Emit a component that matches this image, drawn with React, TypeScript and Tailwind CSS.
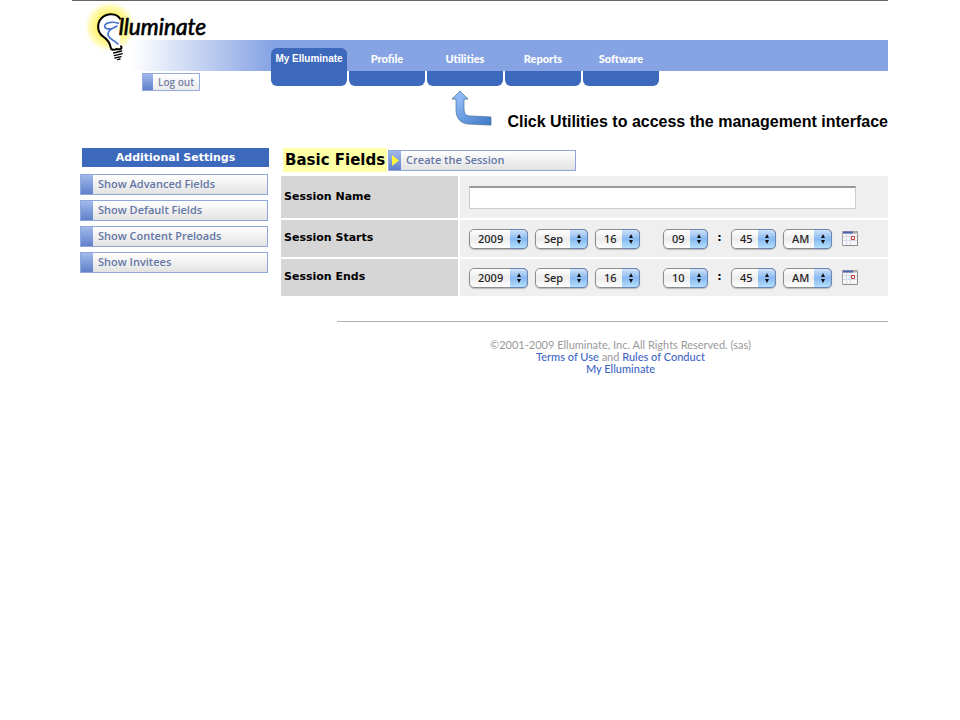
import React, { useState } from "react";

interface SelectProps {
  label: string;
  options: string[];
  value: string;
  className: string;
}

interface SessionTime {
  year: string;
  month: string;
  day: string;
  hour: string;
  minute: string;
  period: string;
}

const tabs: string[] = ["Profile", "Utilities", "Reports", "Software"];

const settings: string[] = [
  "Show Advanced Fields",
  "Show Default Fields",
  "Show Content Preloads",
  "Show Invitees",
];

const years = ["2009", "2010", "2011"];
const months = ["Jan", "Feb", "Mar", "Apr", "May", "Jun", "Jul", "Aug", "Sep", "Oct", "Nov", "Dec"];
const days = Array.from({ length: 31 }, (_, i) => String(i + 1));
const hours = Array.from({ length: 12 }, (_, i) => String(i + 1).padStart(2, "0"));
const minutes = ["00", "15", "30", "45"];
const periods = ["AM", "PM"];

const sessionRows: { label: string; time: SessionTime }[] = [
  {
    label: "Session Starts",
    time: { year: "2009", month: "Sep", day: "16", hour: "09", minute: "45", period: "AM" },
  },
  {
    label: "Session Ends",
    time: { year: "2009", month: "Sep", day: "16", hour: "10", minute: "45", period: "AM" },
  },
];

const Logo = () => (
  <svg
    className="absolute left-3 top-0 h-[60px] w-[127px]"
    viewBox="60 3 381 180"
    fill="none"
    strokeLinecap="round"
    strokeLinejoin="round"
  >
    <defs>
      <radialGradient id="glow">
        <stop offset="0.5" stopColor="#fff36a" />
        <stop offset="0.8" stopColor="#fff9a0" stopOpacity="0.75" />
        <stop offset="1" stopColor="#fffde0" stopOpacity="0" />
      </radialGradient>
    </defs>
    <ellipse cx="138" cy="80" rx="78" ry="77" fill="url(#glow)" />
    <path
      d="M166 60C157 42 128 37 112 55C96 73 101 98 117 110C133 121 138 128 141 145L172 141C170 132 168 126 170 108C176 94 173 75 166 60Z"
      fill="#fff"
    />
    <path
      d="M168 56C157 39 129 38 113 54C96 72 101 98 117 109C132 119 137 127 140 142C141 151 150 151 157 147C168 150 176 145 171 139"
      stroke="#000"
      strokeWidth="6"
    />
    <path d="M149 159L173 153M151 167L175 161M153 174L171 170M161 179L168 177" stroke="#000" strokeWidth="4" />
    <path
      d="M163 70C145 63 122 68 122 79C123 89 146 90 159 78C145 84 131 91 132 103C134 118 151 120 162 132"
      stroke="#4775cf"
      strokeWidth="5"
    />
    <text
      x="164"
      y="106"
      fill="#000"
      stroke="#000"
      strokeWidth="2"
      className="font-['Lato',sans-serif] text-[68px] font-normal italic"
    >
      lluminate
    </text>
  </svg>
);

const Arrow = () => (
  <svg className="mb-1 h-[38px] w-[44px] shrink-0" viewBox="0 0 44 38">
    <defs>
      <linearGradient id="arrow" x1="0" y1="0" x2="1" y2="1">
        <stop offset="0.2" stopColor="#8db8f4" />
        <stop offset="1" stopColor="#3d78c6" />
      </linearGradient>
    </defs>
    <path
      d="M9 2L17 10H13V20C13 25 15 27 20 27L40 28V36L20 35C9 35 5 29 5 20V10H1Z"
      fill="#000"
      opacity="0.12"
    />
    <path
      d="M9 1L17 9H13V18C13 24 15 26 20 26L40 27V35L20 34C9 34 5 28 5 19V9H1Z"
      fill="url(#arrow)"
      stroke="#46719f"
      strokeWidth="0.7"
    />
  </svg>
);

const CalendarIcon = () => (
  <svg className="h-4 w-4" viewBox="0 0 16 16">
    <path d="M0.5 0.5H15.5V14.5H0.5Z" fill="#f7f7fa" stroke="#a5a5a5" />
    <path d="M0 1.5H16" stroke="#aaa8a5" strokeWidth="2" />
    <path d="M1 1.5H11" stroke="#4b64ad" strokeWidth="2" />
    <path d="M1 5.5H15M1 9.5H15M4.5 3V14M8.5 3V14" stroke="#d8dbe8" />
    <path d="M9.5 5.5H12.5V8.5H9.5Z" fill="#fff" stroke="#c23b3b" />
    <path d="M1 14.5H15.5V3" fill="none" stroke="#8d8d8d" />
  </svg>
);

const MacSelect: React.FC<SelectProps> = ({ label, options, value, className }) => {
  const [selected, setSelected] = useState(value);
  return (
    <div className={`relative h-5 ${className}`}>
      <select
        aria-label={label}
        value={selected}
        onChange={(e) => setSelected(e.target.value)}
        className="h-full w-full appearance-none rounded-[5px] border border-[#8c8c8c] bg-linear-to-b from-white via-[#ececec] to-white pl-2 font-['Noto_Sans',sans-serif] text-[11px] leading-4 font-medium text-[#222] shadow-[0_1px_1px_#bbb]"
      >
        {options.map((option) => (
          <option key={option}>{option}</option>
        ))}
      </select>
      <span className="pointer-events-none absolute inset-y-0 right-0 flex w-[18px] items-center justify-center rounded-r-[5px] border border-l-0 border-[#6b86b5] bg-linear-to-b from-[#cfe2f8] via-[#86b8f0] to-[#b5e0fd]">
        <svg className="h-3 w-2" viewBox="0 0 8 12">
          <path d="M4 1L6 5H2ZM4 11L6 7H2Z" fill="#111" />
        </svg>
      </span>
    </div>
  );
};

const BarButton: React.FC<{ text: string; className?: string; marker?: boolean }> = ({
  text,
  className = "",
  marker,
}) => (
  <button
    type="button"
    className={`flex h-[21px] items-stretch border border-[#8fa8dc] bg-linear-to-b from-white to-[#e2e2e2] text-left font-['Open_Sans',sans-serif] text-[11px] leading-[18px] font-semibold text-[#6577a6] ${className}`}
  >
    <span className="flex w-3 shrink-0 items-center justify-center bg-linear-to-b from-[#a3b9ec] to-[#5f80c9]">
      {marker && (
        <svg className="h-[11px] w-2" viewBox="0 0 8 11">
          <path d="M1 0L8 5.5L1 11Z" fill="#fbf53c" />
        </svg>
      )}
    </span>
    <span className="pl-[5px] whitespace-nowrap">{text}</span>
  </button>
);

const Header = () => (
  <header className="relative border-t border-[#666] pt-[39px]">
    <Logo />
    <div className="flex h-[46px] items-start bg-[linear-gradient(to_right,#fff_60px,#86a3e3_200px)] bg-[length:100%_31px] bg-no-repeat">
      <div className="w-[199px] shrink-0 pt-[33px] pl-[70px]">
        <button
          type="button"
          className="flex h-[18px] w-[58px] border border-[#92aadd] bg-linear-to-b from-white to-[#ebebeb] font-['Open_Sans',sans-serif] text-[10px] leading-4 font-semibold text-[#7480a3]"
        >
          <span className="h-full w-[10px] bg-linear-to-b from-[#a3b9ec] to-[#5f80c9]" />
          <span className="pl-[5px] whitespace-nowrap">Log out</span>
        </button>
      </div>
      <nav className="flex gap-[2px] text-center text-[11px] leading-[22px] font-bold text-white">
        <a
          href="#home"
          className="mt-2 h-[38px] w-[76px] rounded-md bg-[#3d69bd] font-['Liberation_Sans',sans-serif] text-[10px] whitespace-nowrap"
        >
          My Elluminate
        </a>
        {tabs.map((tab) => (
          <a
            key={tab}
            href={`#${tab.toLowerCase()}`}
            className="flex w-[76px] flex-col font-['Lato',sans-serif] font-black"
          >
            <span className="h-[31px] pt-2">{tab}</span>
            <span className="h-[15px] rounded-b-md bg-[#3d69bd]" />
          </a>
        ))}
      </nav>
    </div>
  </header>
);

const App: React.FC<{}> = () => {
  const [name, setName] = useState("");
  return (
    <div className="min-h-screen bg-white px-[72px]">
      <Header />
      <div className="flex items-end justify-end gap-3 pt-1">
        <Arrow />
        <p className="font-['Liberation_Sans',sans-serif] text-[16px] leading-5 font-bold whitespace-nowrap text-black">
          Click Utilities to access the management interface
        </p>
      </div>
      <div className="flex items-start gap-3 pt-4 pl-2">
        <aside className="flex w-[189px] shrink-0 flex-col">
          <h2 className="ml-[2px] h-[19px] bg-[#3d69bd] text-center font-['DejaVu_Sans',sans-serif] text-[11px] leading-[19px] font-bold text-white">
            Additional Settings
          </h2>
          <div className="mt-[7px] flex flex-col gap-[5px]">
            {settings.map((text) => (
              <BarButton key={text} text={text} className="w-[188px]" />
            ))}
          </div>
        </aside>
        <main className="grow">
          <div className="flex items-center pl-[2px]">
            <h1 className="bg-[#ffffa5] px-[2px] font-['DejaVu_Sans',sans-serif] text-[15px] leading-6 font-bold whitespace-nowrap text-black">
              Basic Fields
            </h1>
            <BarButton text="Create the Session" className="ml-px w-[188px]" marker />
          </div>
          <table className="mt-1 w-full border-separate border-spacing-0 font-['DejaVu_Sans',sans-serif] text-[11px]">
            <tbody>
              <tr className="h-11">
                <th className="w-[179px] border-r-2 border-b-2 border-white bg-[#d6d6d6] pl-[3px] text-left text-black">
                  <label htmlFor="session-name">Session Name</label>
                </th>
                <td className="border-b-2 border-white bg-[#efefef] pr-8 pl-[9px]">
                  <input
                    id="session-name"
                    type="text"
                    value={name}
                    onChange={(e) => setName(e.target.value)}
                    className="block h-[23px] w-full border border-t-2 border-[#ccc] border-t-[#999] bg-white px-1"
                  />
                </td>
              </tr>
              {sessionRows.map(({ label, time }) => (
                <tr key={label} className="h-[39px]">
                  <th className="border-r-2 border-b-2 border-white bg-[#d6d6d6] pl-[3px] text-left text-black">
                    {label}
                  </th>
                  <td className="border-b-2 border-white bg-[#efefef] pl-[9px]">
                    <div className="flex items-center gap-[7px]">
                      <MacSelect label={`${label} year`} options={years} value={time.year} className="w-[59px]" />
                      <MacSelect label={`${label} month`} options={months} value={time.month} className="w-[53px]" />
                      <MacSelect label={`${label} day`} options={days} value={time.day} className="mr-4 w-[45px]" />
                      <MacSelect label={`${label} hour`} options={hours} value={time.hour} className="w-[45px]" />
                      <span className="w-[9px] text-center font-bold">:</span>
                      <MacSelect label={`${label} minute`} options={minutes} value={time.minute} className="w-[45px]" />
                      <MacSelect label={`${label} AM or PM`} options={periods} value={time.period} className="w-[49px]" />
                      <button type="button" aria-label={`${label} calendar`} className="ml-[3px]">
                        <CalendarIcon />
                      </button>
                    </div>
                  </td>
                </tr>
              ))}
            </tbody>
          </table>
          <footer className="mt-[23px] ml-14 border-t border-[#a8b2b2] pt-[17px] pl-4 text-center font-['Lato',sans-serif] text-[11px] leading-3 text-[#999]">
            <p>©2001-2009 Elluminate, Inc. All Rights Reserved. (sas)</p>
            <p>
              <a href="#terms" className="font-medium text-[#3f66c4]">
                Terms of Use
              </a>{" "}
              and{" "}
              <a href="#rules" className="font-medium text-[#3f66c4]">
                Rules of Conduct
              </a>
            </p>
            <p>
              <a href="#home" className="font-medium text-[#3f66c4]">
                My Elluminate
              </a>
            </p>
          </footer>
        </main>
      </div>
    </div>
  );
};

export default App;
